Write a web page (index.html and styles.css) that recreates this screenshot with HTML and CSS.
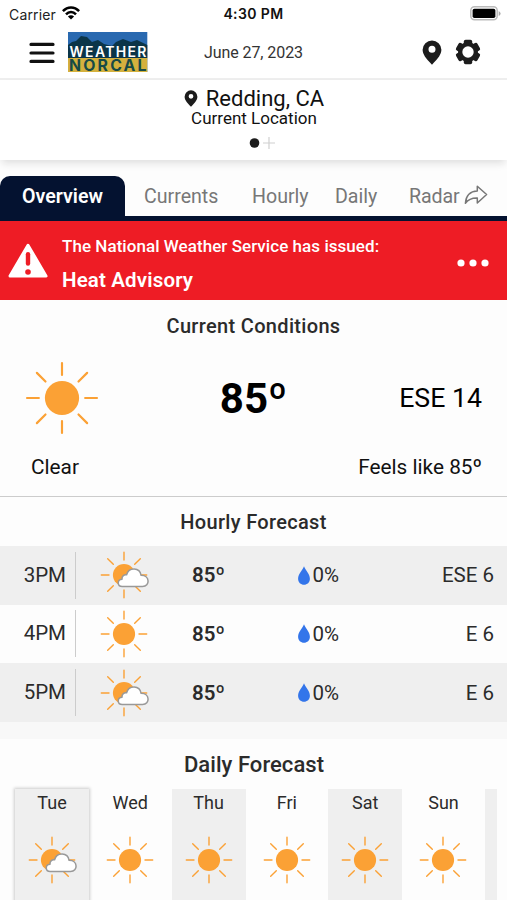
FILE: index.html
```
<!DOCTYPE html>
<html lang="en">
<head>
<meta charset="utf-8">
<title>Weather NorCal</title>
<link rel="stylesheet" href="styles.css">
</head>
<body>
<svg class="defs" aria-hidden="true">
  <symbol id="sun" viewBox="-24 -24 48 48">
    <circle r="11.1" fill="#fba135"/>
    <g stroke="#fba135" stroke-width="1.4" stroke-linecap="round">
      <path d="M0-15V-22.7M0 15V22.7M-15 0H-22.7M15 0H22.7M10.7-10.7L16.3-16.3M-10.7-10.7L-16.3-16.3M10.7 10.7L16.3 16.3M-10.7 10.7L-16.3 16.3"/>
    </g>
  </symbol>
  <symbol id="partly" viewBox="-24 -24 50 48">
    <use href="#sun" x="-24" y="-24" width="48" height="48"/>
    <path d="M-1.8 11.5C-7 11.5-7 4.7-2 4.3C-2.4 .8 .4-.7 2.6-.2C4.7-8 15.7-8 17.1 .3C26.3 .4 26 11.5 18.6 11.5Z" fill="#fff" stroke="#999" stroke-width="1.5" stroke-linejoin="round"/>
  </symbol>
  <symbol id="pin" viewBox="0 0 20 25">
    <path fill-rule="evenodd" d="M10 0.5A9.4 9.4 0 0 0 .6 9.8C.6 14 3.6 18.3 10 24.7C16.4 18.3 19.4 14 19.4 9.8A9.4 9.4 0 0 0 10 .5ZM10 5.8A3.5 3.5 0 1 1 10 12.8A3.5 3.5 0 1 1 10 5.8Z" fill="#1c1c1c"/>
  </symbol>
  <symbol id="drop" viewBox="0 0 12 19">
    <path d="M6 .3C7.5 4.3 11.9 8 11.9 12.7C11.9 16.4 9.2 18.7 6 18.7S.1 16.4 .1 12.7C.1 8 4.5 4.3 6 .3Z" fill="#3375ea"/>
  </symbol>
</svg>

<div class="status">
  <div class="carrier"><span>Carrier</span>
    <svg class="wifi" viewBox="0 0 18 14"><g fill="none" stroke="#000" stroke-width="2.5"><path d="M.9 5.2C5.6.2 12.4.2 17.1 5.2"/><path d="M4 8.4C6.9 5.3 11.1 5.3 14 8.4"/></g><path d="M9 13.6L5.9 10.4C7.6 8.8 10.4 8.8 12.1 10.4Z"/></svg>
  </div>
  <div class="clock">4:30 PM</div>
  <svg class="battery" viewBox="0 0 31 15"><rect x=".8" y=".8" width="26.4" height="13" rx="3.7" fill="#fff" stroke="#bbb" stroke-width="1.5"/><rect x="2.6" y="2.7" width="22.8" height="9.4" rx="1.8"/><path d="M28.7 5V10Q30.6 9 30.6 7.5T28.7 5Z" fill="#aaa"/></svg>
</div>

<header class="header">
  <svg class="menu" viewBox="0 0 26 22"><path d="M2 2.4H24M2 11H24M2 19.4H24" stroke="#111" stroke-width="3.2" stroke-linecap="round"/></svg>
  <svg class="logo" viewBox="0 0 80 41">
    <rect width="79.3" height="40" fill="#2969b0"/>
    <path d="M0 13L4 10L8 9L13 4L19 5L24 10L30 8L36 12L44 14L48 10L55 7L63 10L69 8L79.3 13V26H0Z" fill="#0b3548"/>
    <rect y="26" width="79.3" height="14" fill="#d4b13e"/>
    <text x="1.5" y="24.6" textLength="77" font-size="14" font-weight="600" fill="#fff">WEATHER</text>
    <text x="1" y="38.9" textLength="77.5" font-size="15.8" fill="#174a46">NORCAL</text>
  </svg>
  <div class="date">June 27, 2023</div>
  <svg class="pin-lg"><use href="#pin"/></svg>
  <svg class="gear" viewBox="-13 -13 26 26"><g fill="#1c1c1c"><rect x="-4.2" y="-12.3" width="8.4" height="24.6" rx="1.8"/><rect x="-4.2" y="-12.3" width="8.4" height="24.6" rx="1.8" transform="rotate(60)"/><rect x="-4.2" y="-12.3" width="8.4" height="24.6" rx="1.8" transform="rotate(120)"/><circle r="10"/></g><circle r="5.7" fill="#fff"/></svg>
</header>

<section class="location">
  <div class="place"><svg class="pin-sm"><use href="#pin"/></svg><span>Redding, CA</span></div>
  <div class="sub">Current Location</div>
  <svg class="pager" viewBox="0 0 26 14"><circle cx="5.5" cy="7" r="4.8" fill="#1c1c1c"/><path d="M20 1V13M14 7H26" stroke="#d0d0d0" stroke-width="1.2"/></svg>
</section>

<nav class="tabs">
  <span class="tab active">Overview</span>
  <span class="tab currents">Currents</span>
  <span class="tab hourly-tab">Hourly</span>
  <span class="tab daily-tab">Daily</span>
  <span class="tab radar">Radar</span>
  <svg class="share" viewBox="0 0 24 20"><path d="M13.3 1.2L22.6 9.5L13.3 18V13.1C7.7 12.9 4.4 14.3 1.4 18.3C2.1 10.3 6.1 6.3 13.3 6.1Z" fill="none" stroke="#777" stroke-width="1.5" stroke-linejoin="round"/></svg>
</nav>

<section class="alert">
  <svg class="warn" viewBox="0 0 40 35"><path d="M20 2.2L38 33H2Z" fill="#fff" stroke="#fff" stroke-width="3" stroke-linejoin="round"/><path d="M20 11.2V20.5" stroke="#ee1c25" stroke-width="4.4" stroke-linecap="round"/><circle cx="20" cy="29" r="2.8" fill="#ee1c25"/></svg>
  <div class="alert-text"><div class="issued">The National Weather Service has issued:</div><div class="advisory">Heat Advisory</div></div>
  <svg class="dots" viewBox="0 0 32 8"><g fill="#fff"><circle cx="4" cy="4" r="3.6"/><circle cx="16" cy="4" r="3.6"/><circle cx="28" cy="4" r="3.6"/></g></svg>
</section>

<section class="current">
  <h2>Current Conditions</h2>
  <div class="now">
    <svg class="sun-lg"><use href="#sun"/></svg>
    <div class="temp">85º</div>
    <div class="wind">ESE 14</div>
  </div>
  <div class="summary"><span>Clear</span><span class="feels">Feels like 85º</span></div>
</section>

<section class="hourly">
  <h2>Hourly Forecast</h2>
  <div class="row shade"><div class="hour">3PM</div><svg class="ico"><use href="#partly"/></svg><b>85º</b><div class="rain"><svg class="drop"><use href="#drop"/></svg><span>0%</span></div><div class="gust">ESE 6</div></div>
  <div class="row"><div class="hour">4PM</div><svg class="ico sunny"><use href="#sun"/></svg><b>85º</b><div class="rain"><svg class="drop"><use href="#drop"/></svg><span>0%</span></div><div class="gust">E 6</div></div>
  <div class="row shade"><div class="hour">5PM</div><svg class="ico"><use href="#partly"/></svg><b>85º</b><div class="rain"><svg class="drop"><use href="#drop"/></svg><span>0%</span></div><div class="gust">E 6</div></div>
</section>

<section class="daily">
  <h2>Daily Forecast</h2>
  <div class="days">
    <div class="day shade today"><span>Tue</span><svg class="ico"><use href="#partly"/></svg></div>
    <div class="day"><span>Wed</span><svg class="ico sunny"><use href="#sun"/></svg></div>
    <div class="day shade"><span>Thu</span><svg class="ico sunny"><use href="#sun"/></svg></div>
    <div class="day"><span>Fri</span><svg class="ico sunny"><use href="#sun"/></svg></div>
    <div class="day shade"><span>Sat</span><svg class="ico sunny"><use href="#sun"/></svg></div>
    <div class="day"><span>Sun</span><svg class="ico sunny"><use href="#sun"/></svg></div>
    <div class="day shade"></div>
  </div>
</section>
</body>
</html>
```
FILE: styles.css
```
* { box-sizing: border-box; }
body { margin: 0; width: 507px; height: 900px; overflow: hidden; background: #fdfdfd; color: #2b2b2b; font-family: Roboto, "Liberation Sans", sans-serif; white-space: nowrap; }
svg { display: block; flex: none; }
.defs { position: absolute; width: 0; height: 0; }
h2 { margin: 0; font-size: 20px; line-height: 24px; font-weight: 500; letter-spacing: .33px; text-align: center; color: #2b2b2b; }

.status { height: 28px; display: grid; grid-template-columns: 1fr auto 1fr; align-items: center; padding: 0 6px 0 9px; font-family: Inter, sans-serif; background: #fff; }
.carrier { display: flex; align-items: center; gap: 6px; font-size: 14px; letter-spacing: .15px; color: #222; }
.wifi { width: 18px; height: 14px; margin-top: -2px; }
.clock { margin-left: -3px; margin-top: -1px; font-size: 14px; font-weight: 600; color: #111; letter-spacing: .4px; }
.battery { width: 31px; height: 15px; justify-self: end; margin-top: -2px; }

.header { height: 52px; display: flex; align-items: center; padding-left: 29px; border-bottom: 2px solid #eee; background: #fff; }
.menu { width: 26px; height: 22px; }
.logo { width: 80px; height: 41px; margin: -1px 0 0 13px; font-family: Inter, sans-serif; font-weight: 700; }
.date { width: 100px; margin: -2px 0 0 56px; font-size: 16px; letter-spacing: -.08px; color: #333; }
.pin-lg { width: 20px; height: 25px; margin: -2px 0 0 118px; }
.gear { width: 26px; height: 26px; margin: -2px 0 0 13px; }

.location { height: 80px; padding-top: 6px; display: flex; flex-direction: column; align-items: center; background: #fff; color: #111; box-shadow: 0 5px 8px -2px #ddd; }
.place { display: flex; align-items: center; gap: 8px; height: 25px; font-size: 22px; padding-left: 1px; }
.pin-sm { width: 14px; height: 17px; }
.sub { font-size: 17px; line-height: 16px; margin-top: -1px; padding-left: 1px; }
.pager { width: 26px; height: 14px; margin: 10px 0 0 17px; }

.tabs { height: 61px; padding-top: 16px; display: flex; align-items: flex-start; border-bottom: 5px solid #041230; font-size: 19.6px; color: #777; }
.tab { line-height: 41px; }
.active { width: 125px; height: 40px; text-align: center; border-radius: 10px 10px 0 0; background: #041230; color: #fff; font-weight: 600; }
.currents { width: 108px; padding-left: 19px; }
.hourly-tab { width: 83px; padding-left: 19px; }
.daily-tab { width: 74px; padding-left: 19px; }
.radar { width: 74px; padding-left: 19px; letter-spacing: -.1px; }
.share { width: 24px; height: 20px; margin-top: 9px; }

.alert { height: 79px; display: flex; align-items: center; padding: 0 18px 0 8px; background: #ee1c25; color: #fff; }
.warn { width: 40px; height: 35px; }
.alert-text { flex: 1; margin-left: 14px; padding-top: 14px; }
.issued { font-size: 17px; line-height: 26px; font-weight: 500; letter-spacing: .05px; }
.advisory { font-size: 20.5px; line-height: 43px; font-weight: 600; letter-spacing: .15px; }
.dots { width: 32px; height: 8px; margin-top: 5px; }

.current { height: 197px; padding-top: 14px; border-bottom: 1px solid #ccc; }
.now { height: 120px; display: grid; grid-template-columns: 169px 169px 1fr; align-items: center; padding-right: 25px; color: #000; }
.sun-lg { width: 74px; height: 74px; margin-left: 25px; }
.temp { text-align: center; font-size: 42px; font-weight: 700; }
.wind { text-align: right; font-size: 26.7px; }
.summary { display: flex; justify-content: space-between; margin-top: -3px; padding: 0 25px 0 31px; font-size: 20.8px; line-height: 24px; color: #111; }

.hourly { padding-top: 13px; border-bottom: 17px solid #f8f8f8; }
.hourly h2 { height: 36px; }
.row { height: 58.67px; display: flex; align-items: center; font-size: 20.5px; }
.shade { background: #efefef; }
.hour { width: 76px; height: 47px; line-height: 47px; padding-right: 9px; text-align: right; border-right: 1px solid #ccc; }
.ico { width: 50px; height: 48px; margin-left: 24px; }
.row b { width: 105.5px; margin-left: 42px; font-weight: 600; }
.drop { width: 12px; height: 19px; }
.rain { display: flex; align-items: center; gap: 3px; }
.gust { flex: 1; padding-right: 13px; text-align: right; }
.sunny { width: 48px; margin-right: 2px; }

.daily { padding-top: 14px; }
.daily h2 { font-size: 22px; height: 36px; letter-spacing: .05px; padding-left: 1px; }
.days { display: flex; gap: 4.3px; margin-left: 15px; width: 482px; }
.day { flex: none; width: 74px; height: 120px; padding-top: 1px; font-size: 18px; line-height: 26px; text-align: center; }
.day .ico { margin: 20px 0 0 13px; }
.day:last-child { width: 12px; }
.today { box-shadow: 0 0 3px 1px #ccc; }
```
